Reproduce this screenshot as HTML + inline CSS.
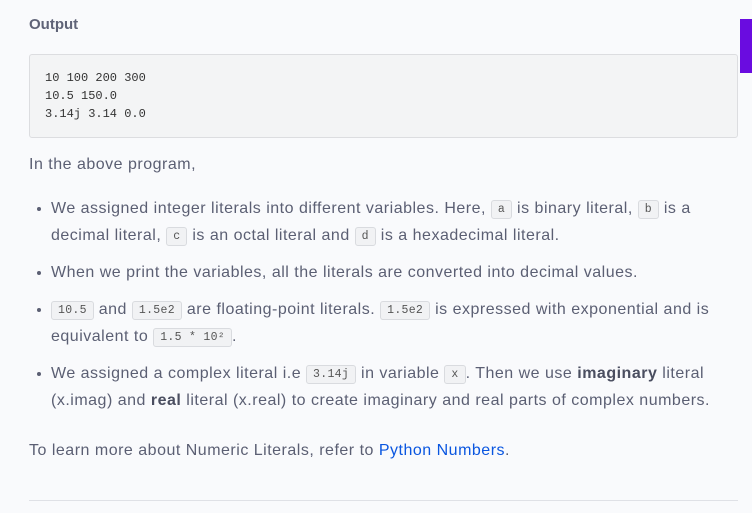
<!DOCTYPE html>
<html><head><style>
html,body{margin:0;padding:0;background:#f9fafc;width:752px;height:513px;overflow:hidden}
body{font-family:"Liberation Sans",sans-serif;color:#5b5f73;position:relative}
.h{position:absolute;left:29px;top:16px;font-weight:bold;font-size:15px;color:#5f6377}
.pre{position:absolute;left:29px;top:54px;width:709px;height:84px;background:#f3f4f5;border:1px solid #dcdde0;border-radius:3px;box-sizing:border-box;font-family:"Liberation Mono",monospace;font-size:12px;line-height:18px;color:#333;padding:14px 0 0 15px;white-space:pre}
.tab{position:absolute;left:740px;top:19px;width:12px;height:54px;background:#6a0ce0}
.p{position:absolute;left:29px;font-size:16px;line-height:27px;white-space:nowrap;letter-spacing:0.5px}
ul{position:absolute;left:29px;top:195px;margin:0;padding:0 0 0 22px;list-style:none;font-size:16px;line-height:27px;white-space:nowrap;letter-spacing:0.5px}
li{position:relative;margin-bottom:10px}
li:before{content:"";position:absolute;left:-14px;top:12px;width:4px;height:4px;border-radius:2px;background:#5b5f73}
code{display:inline-block;line-height:17px;font-family:"Liberation Mono",monospace;font-size:11.5px;letter-spacing:0.3px;background:#f1f2f4;border:1px solid #d9dbdf;border-radius:3px;padding:0 6px;color:#555;vertical-align:1px}
b{color:#4a4e60}
a{color:#0a56e0;text-decoration:none}
.hr{position:absolute;left:29px;top:500px;width:709px;height:1px;background:#dfe1e6}
</style></head><body>
<div class="h">Output</div>
<div class="pre">10 100 200 300
10.5 150.0
3.14j 3.14 0.0</div>
<div class="tab"></div>
<div class="p" style="top:151px">In the above program,</div>
<ul>
<li>We assigned integer literals into different variables. Here, <code>a</code> is binary literal, <code>b</code> is a<br>decimal literal, <code>c</code> is an octal literal and <code>d</code> is a hexadecimal literal.</li>
<li>When we print the variables, all the literals are converted into decimal values.</li>
<li><code>10.5</code> and <code>1.5e2</code> are floating-point literals. <code>1.5e2</code> is expressed with exponential and is<br>equivalent to <code>1.5 * 10²</code>.</li>
<li>We assigned a complex literal i.e <code>3.14j</code> in variable <code>x</code>. Then we use <b>imaginary</b> literal<br>(x.imag) and <b>real</b> literal (x.real) to create imaginary and real parts of complex numbers.</li>
</ul>
<div class="p" style="top:437px">To learn more about Numeric Literals, refer to <a>Python Numbers</a>.</div>
<div class="hr"></div>
</body></html>
